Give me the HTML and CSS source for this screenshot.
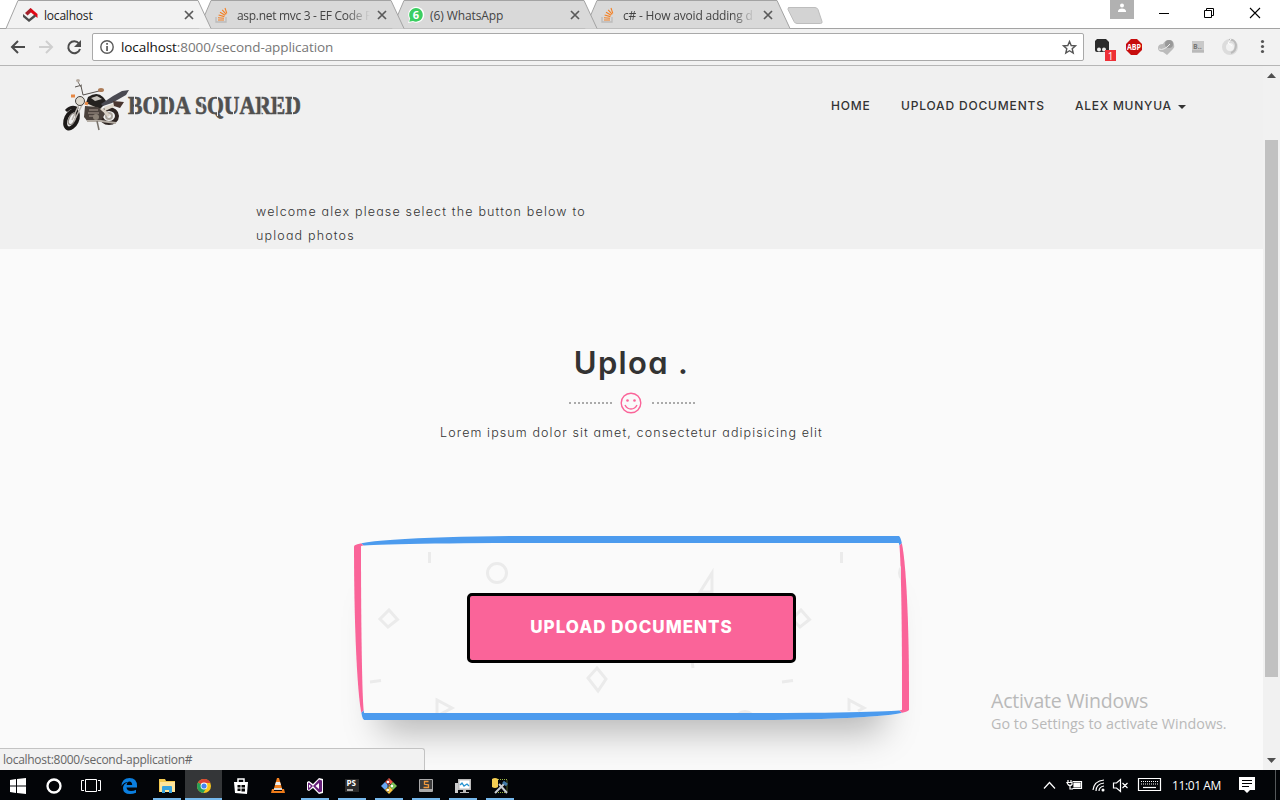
FILE: index.html
```html
<!DOCTYPE html>
<html lang="en">
<head>
<meta charset="utf-8">
<title>localhost</title>
<link rel="stylesheet" href="styles.css">
</head>
<body>
<svg class="defs" width="0" height="0">
  <defs>
    <g id="so"><path d="M1 9v5h10V9" fill="none" stroke="#bcbbba" stroke-width="1.3"/><path d="M3 12h6M3 9.7l6 .6M3.6 7l5.8 1.6M5 4.2l5.2 3M7.2 1.8l4 4.5M10 0l1.8 5.4" stroke="#f48024" stroke-width="1.1"/></g>
    <path id="x" d="M1 1l8 8M9 1l-8 8" stroke="#5a5a5a" stroke-width="1.7"/>
    <path id="tabshape" d="M0 28.5L12 .5H192L205 28.5"/>
  </defs>
</svg>
<header class="tabs">
  <div class="tab active">
    <svg class="shape" width="206" height="29"><use href="#tabshape"/></svg>
    <svg class="fav" width="16" height="14" viewBox="0 0 16 14"><path d="M3 5L8.500 0 11 2.500 5.500 7.500z" fill="#a3202a"/><path d="M8.500 0L15.500 6v4L8.500 4z" fill="#e30613"/><path d="M1 6l6 5 5.500-4.500 1.500 2L7 14 1 9z" fill="#4c4c4c"/></svg>
    <span class="title t1">localhost</span>
    <svg class="close" width="10" height="10"><use href="#x"/></svg>
  </div>
  <div class="tab">
    <svg class="shape" width="206" height="29"><use href="#tabshape"/></svg>
    <svg class="fav" width="16" height="14"><use href="#so"/></svg>
    <span class="title fade t2">asp.net mvc 3 - EF Code F</span>
    <svg class="close" width="10" height="10"><use href="#x"/></svg>
  </div>
  <div class="tab">
    <svg class="shape" width="206" height="29"><use href="#tabshape"/></svg>
    <svg class="fav wa" width="16" height="16" viewBox="0 0 16 16"><path d="M0 16l1.5-4A8 8 0 1 1 5 15z" fill="#fff"/><path d="M1.2 14.8l1-3.3A6.8 6.8 0 1 1 5 14z" fill="#3bce61"/><text x="8" y="12" text-anchor="middle" class="badge6">6</text></svg>
    <span class="title t3">(6) WhatsApp</span>
    <svg class="close" width="10" height="10"><use href="#x"/></svg>
  </div>
  <div class="tab">
    <svg class="shape" width="206" height="29"><use href="#tabshape"/></svg>
    <svg class="fav" width="16" height="14"><use href="#so"/></svg>
    <span class="title fade t4">c# - How avoid adding d</span>
    <svg class="close" width="10" height="10"><use href="#x"/></svg>
  </div>
  <svg class="newtab" width="36" height="18"><path d="M1.500 .5H28q2 0 3 2l4 12q.5 2-1.500 2H10q-2 0-3-2L1 2.500Q.5.5 3 .5z" fill="#d3d3d3" stroke="#bdbdbd"/></svg>
  <div class="wincontrols">
    <svg class="user" width="24" height="19"><path d="M0 0h24v19H0z" fill="#b1b1b1"/><circle cx="12" cy="5.500" r="2" fill="#fff"/><path d="M8 12V10.500Q9 8.500 12 8.500T16 10.500V12z" fill="#fff"/></svg>
    <svg width="10" height="27"><path d="M0 13.500h10" stroke="#000"/></svg>
    <svg width="10" height="27"><path d="M.5 10.500h7v7h-7zM2.500 10V8.500h7v7H8" fill="none" stroke="#000"/></svg>
    <svg width="10" height="27"><path d="M1 8l10 10M11 8L1 18" stroke="#000" stroke-width="1.100"/></svg>
  </div>
</header>
<div class="toolbar">
  <svg width="92" height="36"><g fill="none" stroke-width="2"><path d="M25 18H12M18 12l-6 6 6 6" stroke="#4b4b4b"/><path d="M39 18h13M46 12l6 6-6 6" stroke="#cfcfcf"/><path d="M79 14.500A6 6 0 1 0 80 20" stroke="#4b4b4b"/></g><path d="M81 11v7h-7z" fill="#4b4b4b"/></svg>
  <div class="omnibox">
    <svg width="14" height="14"><circle cx="7" cy="7" r="6.200" fill="none" stroke="#5a5a5a" stroke-width="1.400"/><path d="M6.200 3h1.700v1.700H6.200zM6.200 6h1.700v5H6.200z" fill="#5a5a5a"/></svg>
    <span class="url"><b>localhost</b>:8000/second-application</span>
    <svg width="15" height="15"><path d="M7.500 1.500l1.700 4 4.300.3-3.300 2.900 1 4.300-3.700-2.300L3.800 13l1-4.300L1.500 5.800l4.300-.3z" fill="none" stroke="#555" stroke-width="1.400"/></svg>
  </div>
  <svg class="ext" width="196" height="36">
    <path d="M13 10h9l3 3v8q0 2-2 2H13q-2 0-2-2v-9z" fill="#2b2b2b"/><circle cx="15" cy="20.500" r="2" fill="#eee"/><circle cx="20" cy="20.500" r="2" fill="#eee"/><path d="M21 21h11v11H21z" fill="#ee2f36"/><text x="26.500" y="30.500" text-anchor="middle" class="one">1</text>
    <path d="M47 10h6l5 5v6l-5 5h-6l-5-5v-6z" fill="#c70d0d"/><text x="50" y="21.200" text-anchor="middle" class="abp" textLength="14" lengthAdjust="spacingAndGlyphs">ABP</text>
    <path d="M74 19q0-4 5-4 2-4 6-4t5 4q1 3-1 5l-6 6-4-3q-5 0-5-4z" fill="#bbb"/><circle cx="85" cy="15" r="4" fill="#999"/><path d="M75 20q5 2 11-5" stroke="#eee" fill="none"/>
    <path d="M108 12h12v12h-12z" fill="#c9c9c9"/><text x="109" y="20" class="b">B..</text><path d="M108 22h12" stroke="#aaa"/>
    <circle cx="146" cy="18" r="6" fill="none" stroke="#dcdcdc" stroke-width="4"/><path d="M145 11q6-1 7 5 0 6-5 8" fill="none" stroke="#bbb" stroke-width="2"/><path d="M147 10l-3 4 4 3" fill="none" stroke="#fff"/>
    <g fill="#555"><circle cx="178.500" cy="12.500" r="1.600"/><circle cx="178.500" cy="17.500" r="1.600"/><circle cx="178.500" cy="22.500" r="1.600"/></g>
  </svg>
</div>
<div class="viewport">
  <main class="page">
    <section class="hero">
      <nav class="nav">
        <svg class="logo" width="244" height="56" viewBox="0 0 244 56">
          <g fill="none">
            <ellipse cx="10.500" cy="41.500" rx="5.500" ry="9.500" transform="rotate(25 10.500 41.500)" stroke="#1c1918" stroke-width="4"/>
            <ellipse cx="11" cy="41" rx="3" ry="6" transform="rotate(25 11 41)" stroke="#8e8882" stroke-width="1.500"/>
            <path d="M5 33q6-6 12-2" stroke="#1f1c1b" stroke-width="3"/>
            <ellipse cx="48" cy="38" rx="8" ry="7" stroke="#2d2421" stroke-width="4"/><circle cx="48" cy="38" r="3" stroke="#aaa49c" stroke-width="2"/>
            <path d="M20 22L11 42M23 23L13 43" stroke="#b9b3ac" stroke-width="1.500"/>
            <path d="M25 24l18 9 5 5" stroke="#d8d0c5" stroke-width="3"/>
          </g>
          <path d="M27 19q9-6 15 0l4 5-7 7-14-6z" fill="#24211f"/><path d="M30 20l6-2 5 3-7 2z" fill="#c8c4be"/>
          <path d="M40 26l12-8 9-5 7-1-3 5-14 8-9 3z" fill="#4a4a52"/><path d="M43 29l17-6-3 4-13 6z" fill="#ded6ca"/>
          <path d="M24 28l13 1 7 7-5 8H27l-4-5z" fill="#4a413c"/><path d="M28 32h9M27 35h11M28 38h9" stroke="#a89b90"/><circle cx="35" cy="39" r="3" fill="#8a8075"/>
          <path d="M26 43h14l15 2" fill="none" stroke="#b4ada4" stroke-width="2"/>
          <circle cx="19" cy="23" r="4.500" fill="#ddd8ce" stroke="#464340"/><path d="M10 18h4M24 25l3 1" stroke="#e68744" stroke-width="3"/>
          <path d="M20 8l2 9 16-4M14 9l7-2" stroke="#57524e" fill="none"/><ellipse cx="17" cy="2.500" rx="2" ry="1.500" fill="#b5aaa0"/><ellipse cx="40" cy="12" rx="3" ry="2" fill="#ad7c58"/><path d="M17 4l3 5" stroke="#77716a"/><path d="M52 23l11 1-4 6-6-2z" fill="#493630"/><path d="M36 43l2 9" stroke="#77716a" stroke-width="1.500" fill="none"/>
          <text x="67" y="36" class="brand" textLength="173" lengthAdjust="spacingAndGlyphs">BODA SQUARED</text>
          <path d="M73.500 18v20M91.500 18v20M107.500 18v20M119 30v8M141 24v8M156.500 18v20M172.500 18v20M185 30v8M200 18v20M216 18v20M231.500 18v20" stroke="#f0f0f0" stroke-width="1"/>
        </svg>
        <div class="links"><a class="l1">HOME</a><a class="l2">UPLOAD DOCUMENTS</a><a class="l3">ALEX MUNYUA<i class="caret"></i></a></div>
      </nav>
      <p class="welcome"><span class="w1">welcome alex please select the button below to</span><br><span class="w2">upload photos</span></p>
    </section>
    <section class="content">
      <h1>Uploa .</h1>
      <div class="divider"><i></i><svg width="22" height="22"><g fill="none" stroke="#fa6499" stroke-width="1.400"><circle cx="11" cy="11" r="9.800"/><path d="M5 13q2 4 6 4t6-4"/></g><circle cx="7.500" cy="8.500" r="1.300" fill="#fa6499"/><circle cx="14.500" cy="8.500" r="1.300" fill="#fa6499"/></svg><i></i></div>
      <p class="lorem">Lorem ipsum dolor sit amet, consectetur adipisicing elit</p>
      <div class="box">
        <svg class="pattern" width="540" height="170"><g fill="none" stroke="#ebebeb" stroke-width="3">
          <path d="M68.500 9v11M480.500 9v11M9 139l11-1.500M421 139l11-1.500M330 110l2 15"/>
          <circle cx="136" cy="30" r="9.500"/><circle cx="548" cy="30" r="9.500"/><circle cx="384" cy="178" r="9.500"/>
          <path d="M28 67l8.500 9.500L27 84l-8-8zM440 67l8.500 9.500-9.500 7.500-8-8zM339 49l12-19v19z"/>
          <path d="M236 125l9 11-8 12-10-13zM76 173v-16l15 8zM488 168v-11l15 8-6 3"/>
        </g></svg>
        <a class="button"><span>UPLOAD DOCUMENTS</span></a>
      </div>
    </section>
    <div class="status"><span>localhost:8000/second-application#</span></div>
    <div class="watermark"><div class="wm1">Activate Windows</div><div class="wm2">Go to Settings to activate Windows.</div></div>
  </main>
  <aside class="scroll"><svg width="9" height="5"><path d="M0 5L4.500 0 9 5z" fill="#505050"/></svg><div class="thumb"></div><svg width="9" height="5"><path d="M0 0h9L4.500 5z" fill="#505050"/></svg></aside>
</div>
<footer class="taskbar">
  <div class="apps">
    <div class="app"><svg viewBox="0 0 16 16"><path d="M0 2l6-1v6.500H0zM7 1l9-1v7.500H7zM0 8.500h6V15l-6-1zM7 8.500h9V16l-9-1z" fill="#fff"/></svg></div>
    <div class="app"><svg viewBox="0 0 16 16"><circle cx="8" cy="8" r="6.500" fill="none" stroke="#fff" stroke-width="2.300"/></svg></div>
    <div class="app"><svg class="wide" viewBox="0 0 20 16"><path d="M4.500 1.500h11v12h-11zM3 2.500H.5v10H3M17 2.500h2.500v10H17" fill="none" stroke="#fff"/></svg></div>
    <div class="app"><svg viewBox="0 0 16 16"><path d="M.5 8Q1 0 8.500 0 16 0 16 8v1.500H5.500Q6 13 10 13q3 0 5-1.200v3Q12 16 9 16 2 16 2 10q0-4 5-6-4 0-6.500 4zM5.700 7h5.500Q11 3.500 8.500 3.500T5.700 7z" fill="#0b7fe0"/></svg></div>
    <div class="app open"><svg viewBox="0 0 16 16"><path d="M0 1h6l1 2h9v11H0z" fill="#f3c94f"/><path d="M1 4h15v10H1z" fill="#ffe59a"/><path d="M3 15V9q0-1 1-1h8q1 0 1 1v6h-3v-3H6v3z" fill="#37a3df"/></svg></div>
    <div class="app open current"><svg viewBox="0 0 16 16"><circle cx="8" cy="8" r="7" fill="#f7c51e"/><path d="M8 8L2 4.500A7 7 0 0 1 14.500 5H8z" fill="#db4437"/><path d="M8 8L2 4.500A7 7 0 0 0 7.300 15L11 9z" fill="#26a05a"/><circle cx="8" cy="8" r="3.400" fill="#fff"/><circle cx="8" cy="8" r="2.600" fill="#4285f4"/></svg></div>
    <div class="app"><svg viewBox="0 0 16 16"><path d="M1 4h14l-1 12-12-1z" fill="#fff"/><path d="M5 5V1h6v4" fill="none" stroke="#fff" stroke-width="1.500"/><path d="M4.500 7H7.500v2.500H4.500zM8.500 7H12v2.500H8.500zM4.500 10.500H7.500V13H4.500zM8.500 10.500H12v3H8.500z" fill="#050505"/></svg></div>
    <div class="app"><svg viewBox="0 0 16 16"><path d="M7 0h2l3.500 12h-9z" fill="#f58220"/><path d="M6 4h4l1 3H5z" fill="#eee"/><path d="M4.200 10h7.600l.5 2H3.600z" fill="#ddd"/><path d="M2 11h2v2h8v-2h2l1 4H1z" fill="#ee7b19"/></svg></div>
    <div class="app open"><svg viewBox="0 0 16 16"><path d="M0 4l2-1 4 3 6-6 4 1v14l-4 1-6-6-4 3-2-1z" fill="#fff"/><path d="M1 5l1-.5L6 8l6-6.500 3 1v11l-3 1L6 8l-4 4-1-.5z" fill="#68217a"/><path d="M12 5v6L8.500 8zM2 6.500L4 8 2 10z" fill="#fff"/></svg></div>
    <div class="app open"><svg viewBox="0 0 16 16"><path d="M1 1h14v13H1z" fill="#2a2a2a"/><text x="2.500" y="8" class="ps">PS</text><path d="M3 12h6" stroke="#fff" stroke-width="1.200"/></svg></div>
    <div class="app open"><svg viewBox="0 0 16 16"><path d="M8 0l4 4-4 4-4-4z" fill="#ee5344"/><path d="M4 4l4 4-4 4-4-4z" fill="#69a7f4"/><path d="M12 4l4 4-4 4-4-4z" fill="#7bc257"/><path d="M8 8l4 4-4 4-4-4z" fill="#f6c342"/><path d="M7 1v13M7 4l4 4" stroke="#333"/><circle cx="7" cy="4" r="1.200" fill="#fff"/><circle cx="11" cy="8" r="1.200" fill="#fff"/><circle cx="7" cy="12" r="1.200" fill="#fff"/></svg></div>
    <div class="app open"><svg viewBox="0 0 16 16"><rect x="1" y="1" width="14" height="13" rx="1" fill="#aaa"/><path d="M2 2h12v9H2z" fill="#3c3c3c"/><path d="M10.500 3.500H6.500v2.800l4 .5V9.500H5.500" fill="none" stroke="#f29a3d" stroke-width="1.300"/></svg></div>
    <div class="app open"><svg viewBox="0 0 16 16"><path d="M0 5h3v10H0z" fill="#ccc"/><path d="M3 1h13v11H3z" fill="#bbb"/><path d="M4.500 2.500h10v8h-10z" fill="#fff"/><path d="M5 7l2-2 2 3 3-2 2 2" stroke="#2492d0" fill="none" stroke-width="1.300"/><path d="M8 12h3v2h3v1H5v-1h3z" fill="#bbb"/></svg></div>
    <div class="app open"><svg viewBox="0 0 16 16"><path d="M4 1.500h11v13H3" stroke="#9db744" stroke-dasharray="1 1" fill="none"/><path d="M0 1q3-2 6 0v8q-3 2-6 0z" fill="#f4cd52"/><path d="M3 15l10-10M7 6l8 9" stroke="#c7cbd0" stroke-width="2"/><path d="M11 4l4 3" stroke="#427aa9" stroke-width="3"/></svg></div>
  </div>
  <div class="tray">
    <svg width="130" height="30"><g fill="none" stroke="#fff" stroke-width="1.200"><path d="M5 18.500l5.500-6 5.500 6"/><path d="M33.500 11.500h9v7h-9M29 10v2M32 10v2M28 12.500h5v2q-2 2-4 0zM31 16v3h3" /><path d="M35 13h6v4h-6z" fill="#fff"/><path d="M54 20Q55 11 65 10M57 21Q57 14 65 13M60 21Q60 17 65 16"/><path d="M74.500 13h3l4-3.500v12l-4-3.500h-3zM83.500 13l5 5M88.500 13l-5 5"/><path d="M99.500 8.500h22v12h-22z"/><path d="M102 11.500h17M102 14h17" stroke-dasharray="1 1"/><path d="M104 17.500h13"/></g><circle cx="64" cy="20" r="1.500" fill="#fff"/></svg>
    <span class="time">11:01 AM</span>
    <svg width="16" height="16"><path d="M0 0h16v13h-5l-3 3-3-3H0z" fill="#fff"/><path d="M3 3.500h10M3 6.500h10M3 9.500h7" stroke="#000"/></svg>
    <i class="desk"></i>
  </div>
</footer>
</body>
</html>
```
FILE: styles.css
```css
* { box-sizing: border-box; }
body { margin: 0; width: 1280px; height: 800px; overflow: hidden; display: flex; flex-direction: column; font-family: "Open Sans", "Noto Sans", sans-serif; font-size: 12px; background: #fff; }
svg { display: block; flex: none; overflow: visible; }
.defs { position: absolute; }
span, a, .wm1, .wm2 { white-space: nowrap; }

.tabs { height: 29px; flex: none; display: flex; padding-left: 12px; border-bottom: 1px solid #a3a3a3; }
.tab { position: relative; width: 193px; height: 28px; display: flex; align-items: center; padding: 2px 11px 0 10px; z-index: 3; }
.tab:nth-child(2) { z-index: 2; }
.tab:nth-child(3) { z-index: 1; }
.tab:nth-child(4) { z-index: 0; }
.tab.active { z-index: 4; }
.shape { position: absolute; left: -6px; top: 0; z-index: -1; fill: #d9d9d9; stroke: #a3a3a3; }
.active .shape { fill: #f2f2f2; }
.fav { margin-right: 6px; }
.title { flex: 1; overflow: hidden; color: #444; }
.active .title { color: #222; }
.fade { -webkit-mask-image: linear-gradient(90deg, #000 82%, transparent 100%); mask-image: linear-gradient(90deg, #000 82%, transparent 100%); }
.t1 { letter-spacing: -.2px; }
.t2 { letter-spacing: -.3px; }
.t3 { letter-spacing: -.1px; }
.t4 { letter-spacing: -.2px; }
.close { margin-left: 7px; }
.badge6 { font: bold 11px "Open Sans", sans-serif; fill: #fff; }
.newtab { margin: 7px 0 0 3px; }
.wincontrols { margin-left: auto; display: flex; gap: 35px; padding-right: 21px; }
.wincontrols .user { margin-right: -10px; }

.toolbar { height: 37px; flex: none; display: flex; background: #f2f2f2; border-bottom: 1px solid #b6b6b6; }
.omnibox { width: 992px; height: 28px; margin-top: 4px; border: 1px solid #a9a9a9; border-radius: 2px; background: #fff; display: flex; align-items: center; padding: 0 6px 0 7px; }
.url { flex: 1; margin-left: 7px; color: #777; font-size: 13.5px; letter-spacing: -.08px; }
.url b { font-weight: 400; color: #111; }
.one { font: 10px "Open Sans", sans-serif; fill: #fff; }
.abp { font: bold 8.500px "Open Sans", sans-serif; fill: #fff; }
.b { font: bold 7px "Open Sans", sans-serif; fill: #777; }

.viewport { height: 704px; flex: none; display: flex; }
.page { width: 1263px; height: 704px; position: relative; background: #fafafa; font-family: Inter, sans-serif; font-feature-settings: "cv11"; color: #333; }
.hero { height: 183px; background: #f0f0f0; }
.nav { height: 80px; display: flex; justify-content: space-between; padding: 12px 76px 0 61px; }
.brand { font: bold 25px "Liberation Serif", serif; fill: #505050; stroke: #505050; stroke-width: .6px; }
.links { display: flex; align-items: flex-start; gap: 30px; padding-top: 20px; font-size: 12px; line-height: 15px; font-weight: 500; letter-spacing: .83px; }
.l1 { width: 40px; }
.l2 { width: 144px; }
.l3 { width: 112px; display: flex; align-items: center; letter-spacing: .75px; }
.caret { border: 4px solid transparent; border-top-color: #333; border-bottom: 0; margin: 3px 0 0 6px; }
.welcome { margin: 0; padding: 54px 0 0 256px; font-size: 12.5px; font-weight: 300; line-height: 24px; letter-spacing: 1.170px; }
.content { height: 521px; overflow: hidden; display: flex; flex-direction: column; align-items: center; }
h1 { margin: 93px 0 0; font-size: 31px; line-height: 42px; font-weight: 600; letter-spacing: 1.300px; }
.divider { display: flex; align-items: center; gap: 9px; margin: 8px 0 0 1px; }
.divider svg { position: relative; left: -1px; }
.divider i { width: 43px; border-top: 2px dotted #aaa; }
.lorem { margin: 6px 0 0; font-size: 12.5px; font-weight: 300; line-height: 26px; letter-spacing: 1.110px; }
.box { margin-top: 90px; width: 555px; height: 184px; flex: none; position: relative; display: flex; align-items: center; justify-content: center; border: 7px solid; border-color: #4c9bee #fa6499; border-radius: 255px 15px 225px 15px / 15px 225px 15px 255px; box-shadow: 0 38px 34px -26px rgba(0,0,0,.28); }
.pattern { position: absolute; left: 0; top: 0; overflow: hidden; }
.button { position: relative; width: 329px; height: 70px; padding-bottom: 3px; border: 3px solid #000; border-radius: 5px; background: #fa6499; color: #fff; font-weight: 800; font-size: 17px; letter-spacing: 1px; display: flex; align-items: center; justify-content: center; }
.status { position: absolute; left: 0; bottom: 0; width: 425px; height: 22px; padding: 1px 3px; border: 1px solid #c3c3c3; border-left: 0; border-bottom: 0; border-radius: 0 3px 0 0; background: #f2f2f2; color: #666; font: 12px/20px "Open Sans", sans-serif; letter-spacing: -.28px; }
.watermark { position: absolute; left: 991px; top: 622px; color: #b9b9b9; font-family: "Open Sans", sans-serif; }
.wm1 { font-size: 19.5px; line-height: 26px; letter-spacing: -.18px; }
.wm2 { font-size: 14.3px; line-height: 20px; letter-spacing: .04px; }
.scroll { width: 17px; background: #f1f1f1; display: flex; flex-direction: column; align-items: center; padding: 7px 0; }
.thumb { width: 13px; height: 537px; margin: 62px 0 auto; background: #c1c1c1; }

.taskbar { height: 30px; flex: none; display: flex; justify-content: space-between; background: #030508; }
.apps { display: flex; }
.app { width: 37px; display: flex; align-items: center; justify-content: center; padding-top: 1px; }
.app svg { width: 16px; height: 16px; }
.app svg.wide { width: 20px; }
.app:first-child { width: 35px; }
.app:nth-child(4) { width: 39px; }
.open { background: linear-gradient(#76b9ed, #76b9ed) center bottom / 28px 2px no-repeat; }
.current { background: linear-gradient(#76b9ed, #76b9ed) center bottom / 37px 2px no-repeat, #343638; }
.ps { font: bold 8px "Open Sans", sans-serif; fill: #fff; }
.tray { display: flex; align-items: center; color: #fff; }
.time { width: 50px; margin: 0 17px 0 3px; font-size: 12px; letter-spacing: -.4px; }
.desk { width: 1px; height: 30px; margin: 0 4px 0 20px; background: #55585a; }
```
